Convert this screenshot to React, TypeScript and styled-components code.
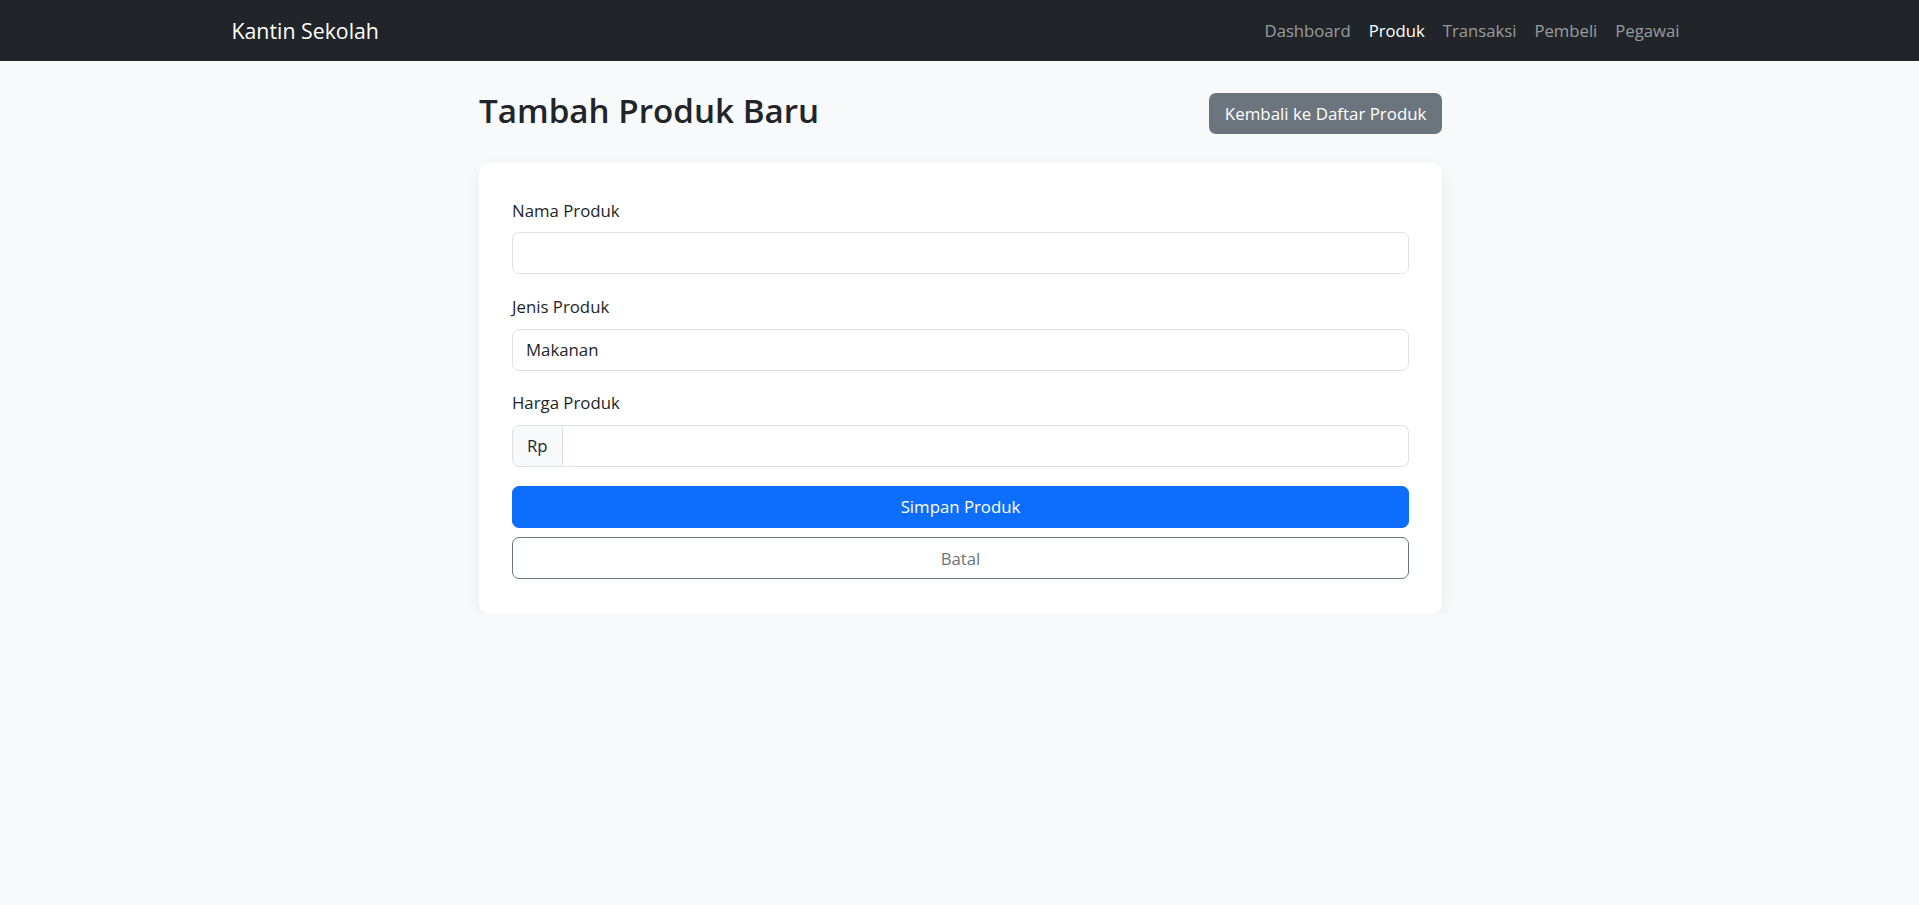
import React from "react";
import styled, { createGlobalStyle } from "styled-components";

const GlobalStyle = createGlobalStyle`
  *, *::before, *::after { box-sizing: border-box; }
  html, body { margin: 0; padding: 0; }
  body {
    background: #f8f9fa;
    color: #212529;
    font-family: "Open Sans", "Noto Sans", sans-serif;
    font-size: 16.8px;
    line-height: 1.5;
  }
`;

const Navbar = styled.nav`
  height: 61px;
  background: #212529;
  display: flex;
  align-items: center;
`;

const NavContainer = styled.div`
  width: 100%;
  max-width: 1458px;
  margin: 0 auto;
  display: flex;
  align-items: center;
  justify-content: space-between;
`;

const Brand = styled.a`
  color: #fff;
  font-size: 21.3px;
  line-height: 1.5;
  text-decoration: none;
  margin-left: 1px;
`;

const NavList = styled.ul`
  list-style: none;
  margin: 0;
  padding: 0;
  display: flex;
`;

const NavLink = styled.a<{ $active?: boolean }>`
  display: block;
  padding: 8px 9px;
  font-size: 16.7px;
  color: ${(p) => (p.$active ? "#fff" : "rgba(255,255,255,0.55)")};
  text-decoration: none;
`;

const Main = styled.main`
  width: 963px;
  margin-left: calc(50% - 480.5px);
  padding-top: 32px;
`;

const Header = styled.div`
  display: flex;
  align-items: center;
  justify-content: space-between;
  margin-bottom: 28.5px;
`;

const Title = styled.h1`
  margin: 0;
  padding-bottom: 5px;
  font-size: 33.2px;
  font-weight: 600;
  line-height: 36px;
  color: #212529;
`;

const BackButton = styled.a`
  display: inline-flex;
  align-items: center;
  justify-content: center;
  height: 41px;
  padding: 0 15.5px;
  background: #6c757d;
  color: #fff;
  border-radius: 7px;
  font-size: 16.9px;
  text-decoration: none;
`;

const Card = styled.div`
  background: #fff;
  border-radius: 10px;
  box-shadow: 0 6px 18px rgba(0, 0, 0, 0.06);
  padding: 35px 33px 34.5px 33px;
`;

const Field = styled.div<{ $last?: boolean }>`
  margin-bottom: ${(p) => (p.$last ? "18.7px" : "19.6px")};
`;

const Label = styled.label`
  display: block;
  line-height: 25.2px;
  margin-bottom: 9.6px;
  color: #212529;
`;

const Input = styled.input`
  display: block;
  width: 100%;
  height: 42px;
  padding: 0 14px;
  font: inherit;
  color: #212529;
  background: #fff;
  border: 1px solid #dee2e6;
  border-radius: 7px;
  outline: none;
`;

const Select = styled.select`
  display: block;
  width: 100%;
  height: 42px;
  padding: 0 13px;
  font: inherit;
  color: #212529;
  background: #fff;
  border: 1px solid #dee2e6;
  border-radius: 7px;
  appearance: none;
  outline: none;
`;

const InputGroup = styled.div`
  display: flex;
  height: 42px;
`;

const Addon = styled.span`
  display: flex;
  align-items: center;
  flex: 0 0 50px;
  padding: 0 14px;
  background: #f8f9fa;
  border: 1px solid #dee2e6;
  border-radius: 7px 0 0 7px;
  color: #212529;
`;

const GroupInput = styled(Input)`
  flex: 1;
  height: 100%;
  border-left: none;
  border-radius: 0 7px 7px 0;
`;

const Actions = styled.div`
  display: grid;
  gap: 9.6px;
`;

const Button = styled.button<{ $variant: "primary" | "outline" }>`
  height: 42px;
  width: 100%;
  font: inherit;
  border-radius: 7px;
  cursor: pointer;
  border: 1px solid ${(p) => (p.$variant === "primary" ? "#0d6efd" : "#6c757d")};
  background: ${(p) => (p.$variant === "primary" ? "#0d6efd" : "#fff")};
  color: ${(p) => (p.$variant === "primary" ? "#fff" : "#6c757d")};
`;

export default function App() {
  return (
    <>
      <GlobalStyle />
      <Navbar>
        <NavContainer>
          <Brand href="#">Kantin Sekolah</Brand>
          <NavList>
            <li><NavLink href="#">Dashboard</NavLink></li>
            <li><NavLink href="#" $active>Produk</NavLink></li>
            <li><NavLink href="#">Transaksi</NavLink></li>
            <li><NavLink href="#">Pembeli</NavLink></li>
            <li><NavLink href="#">Pegawai</NavLink></li>
          </NavList>
        </NavContainer>
      </Navbar>
      <Main>
        <Header>
          <Title>Tambah Produk Baru</Title>
          <BackButton href="#">Kembali ke Daftar Produk</BackButton>
        </Header>
        <Card>
          <form onSubmit={(e) => e.preventDefault()}>
            <Field>
              <Label htmlFor="nama">Nama Produk</Label>
              <Input id="nama" type="text" />
            </Field>
            <Field>
              <Label htmlFor="jenis">Jenis Produk</Label>
              <Select id="jenis" defaultValue="Makanan">
                <option>Makanan</option>
                <option>Minuman</option>
              </Select>
            </Field>
            <Field $last>
              <Label htmlFor="harga">Harga Produk</Label>
              <InputGroup>
                <Addon>Rp</Addon>
                <GroupInput id="harga" type="number" />
              </InputGroup>
            </Field>
            <Actions>
              <Button type="submit" $variant="primary">Simpan Produk</Button>
              <Button type="button" $variant="outline">Batal</Button>
            </Actions>
          </form>
        </Card>
      </Main>
    </>
  );
}
